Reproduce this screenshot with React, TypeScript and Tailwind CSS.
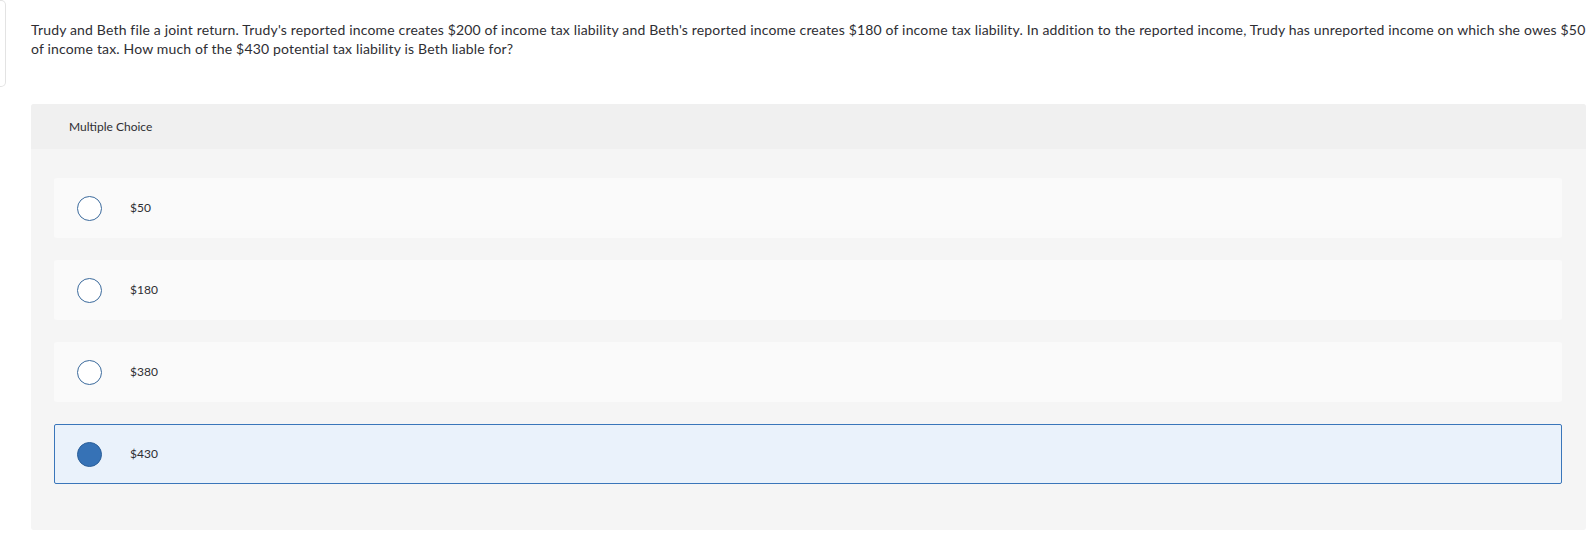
const options = [
  { label: '$50', selected: false },
  { label: '$180', selected: false },
  { label: '$380', selected: false },
  { label: '$430', selected: true },
];

function Radio({ selected }: { selected: boolean }) {
  if (selected) {
    return <div className="w-[25px] h-[25px] rounded-full bg-[#3672b6] border border-[#2b5f99] shrink-0" />;
  }
  return <div className="w-[25px] h-[25px] rounded-full bg-white border-[1.5px] border-[#3b6a9c] shrink-0" />;
}

export default function App() {
  return (
    <div className="w-[1588px] h-[535px] bg-white overflow-hidden flex items-start font-['Lato','Liberation_Sans',sans-serif] text-[#2e2e33]">
      <div className="w-[6px] h-[87px] shrink-0 border border-l-0 border-[#e3e3e3] rounded-r-[5px]" />
      <div className="flex-1 pl-[25px] pr-[2px]">
        <p className="pt-[20px] text-[14px] leading-[19px] tracking-[0.17px]">
          Trudy and Beth file a joint return. Trudy's reported income creates $200 of income tax liability and Beth's reported income creates $180 of income tax liability. In addition to the reported income, Trudy has unreported income on which she owes $50 of income tax. How much of the $430 potential tax liability is Beth liable for?
        </p>
        <div className="mt-[46px] h-[426px] rounded-[3px] bg-[#f5f5f5] overflow-hidden">
          <div className="h-[45px] bg-[#f0f0f0] flex items-center pl-[38px] text-[12px]">
            Multiple Choice
          </div>
          <div className="pt-[29px] pl-[23px] pr-[24px] flex flex-col gap-[22px]">
            {options.map((o) => (
              <div
                key={o.label}
                className={
                  o.selected
                    ? 'h-[60px] rounded-[2px] border border-[#3a76ba] bg-[#eaf2fb] flex items-center pl-[22px]'
                    : 'h-[60px] rounded-[3px] bg-[#fafafa] flex items-center pl-[23px]'
                }
              >
                <Radio selected={o.selected} />
                <span className="ml-[28px] text-[12px]">{o.label}</span>
              </div>
            ))}
          </div>
        </div>
      </div>
    </div>
  );
}
